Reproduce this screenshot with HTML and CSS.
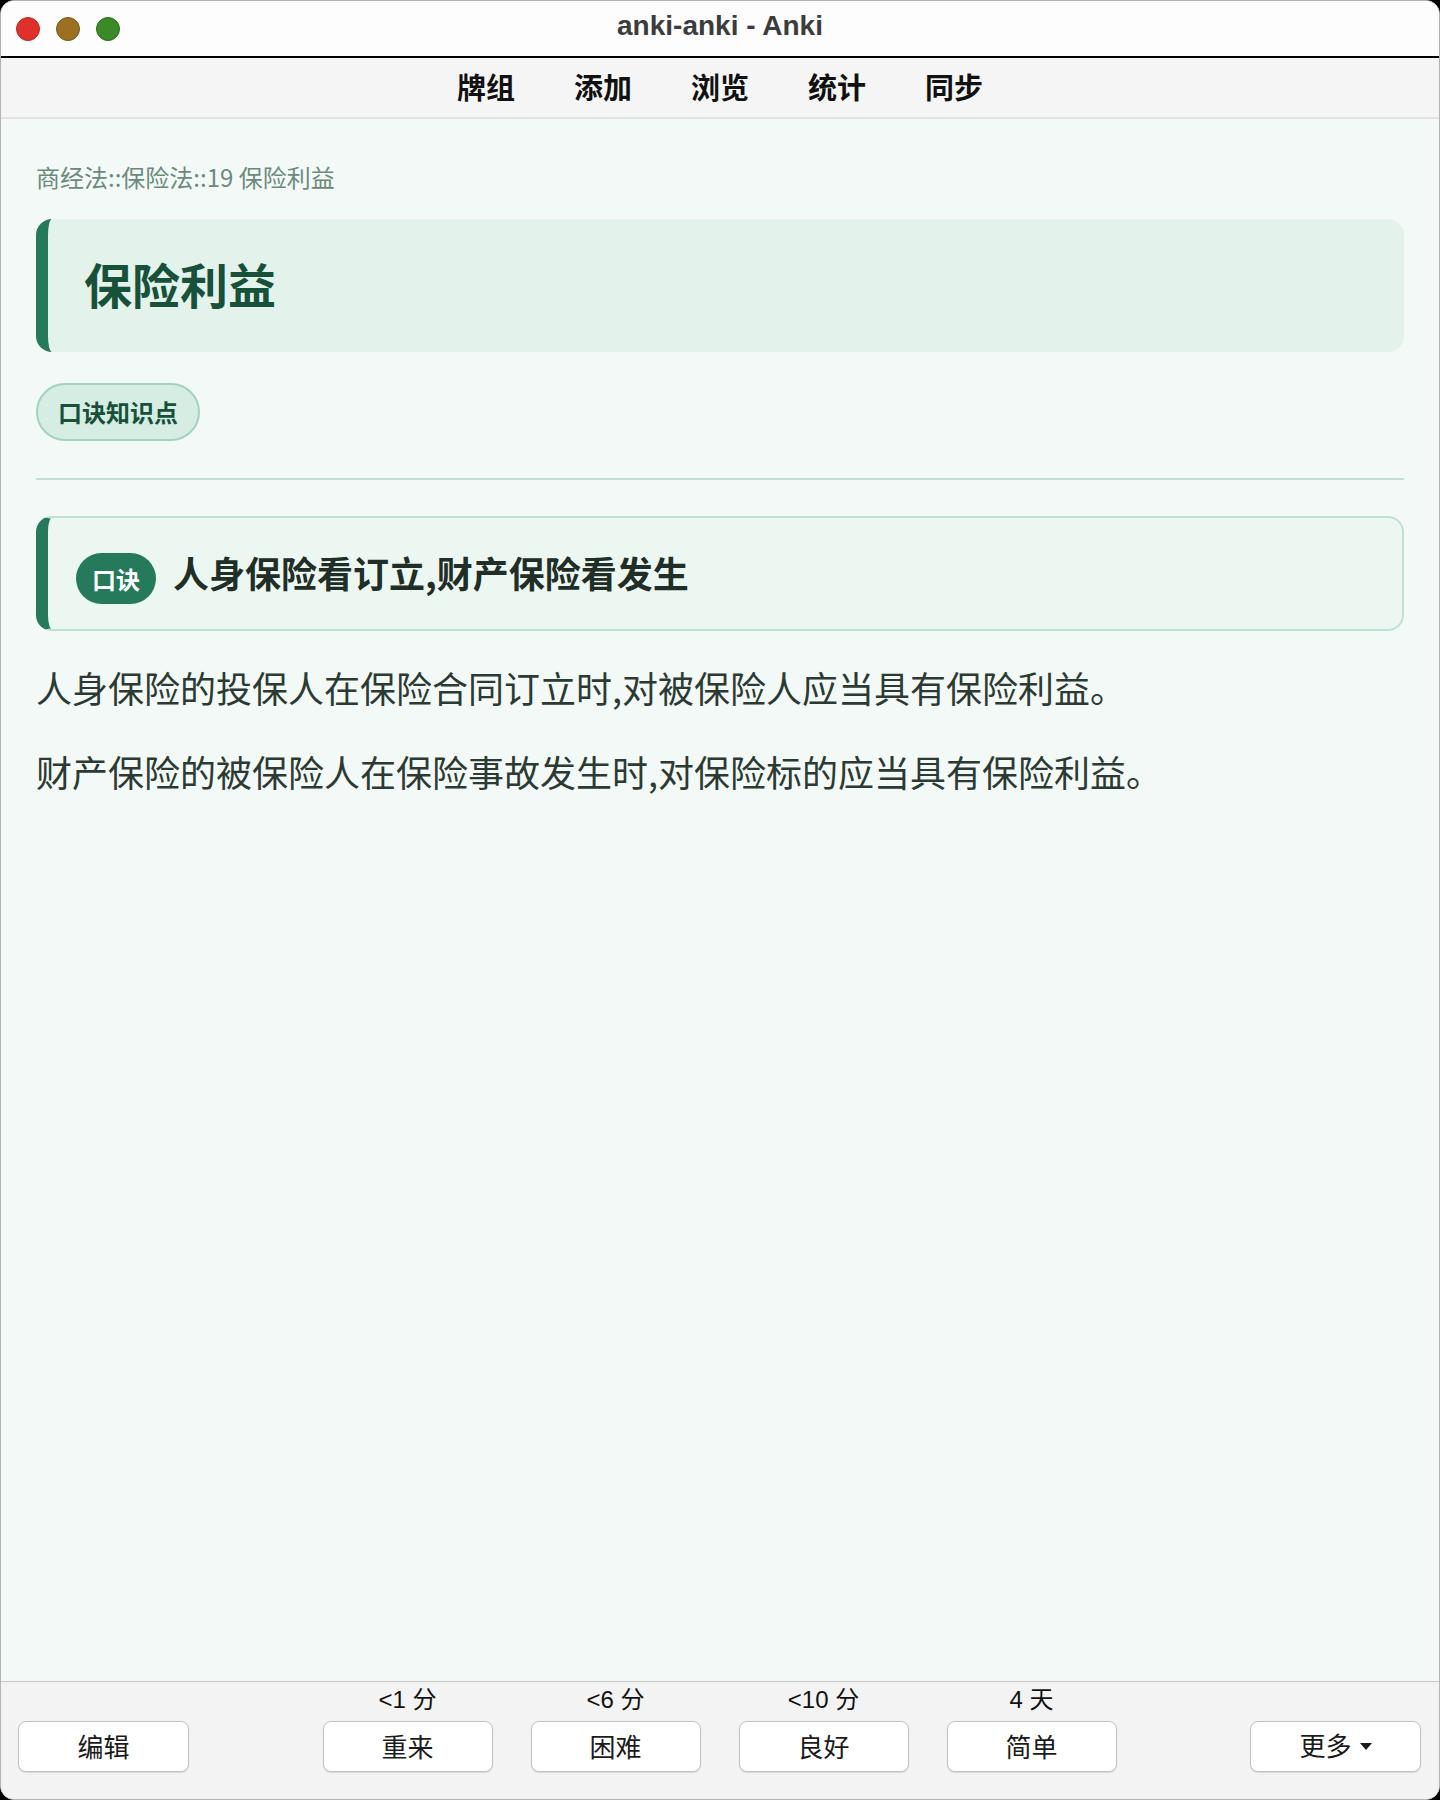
FILE: index.html
```html
<!DOCTYPE html>
<html lang="zh-CN">
	<head>
		<meta charset="UTF-8" />
		<meta name="viewport" content="width=device-width, initial-scale=1.0" />
		<title>anki-anki - Anki</title>
		<link rel="stylesheet" href="styles.css">
	</head>
	<body>
		<div class="window">
			<!-- Title bar with traffic lights -->
			<div class="titlebar">
				<div class="lights">
					<span class="light red"></span>
					<span class="light yellow"></span>
					<span class="light green"></span>
				</div>
				<div class="window-title">anki-anki - Anki</div>
				<div></div>
			</div>

			<!-- Main toolbar -->
			<nav class="toolbar">
				<a class="tool-link">牌组</a>
				<a class="tool-link">添加</a>
				<a class="tool-link">浏览</a>
				<a class="tool-link">统计</a>
				<a class="tool-link">同步</a>
			</nav>

			<!-- Card content -->
			<main class="card-view">
				<div class="breadcrumb">商经法::保险法::19 保险利益</div>

				<div class="title-card">
					<h1>保险利益</h1>
				</div>

				<div class="tags">
					<span class="tag">口诀知识点</span>
				</div>

				<hr class="divider" />

				<div class="mnemonic">
					<span class="badge">口诀</span>
					<span class="mnemonic-text">人身保险看订立,财产保险看发生</span>
				</div>

				<p class="answer-text">人身保险的投保人在保险合同订立时,对被保险人应当具有保险利益。</p>
				<p class="answer-text">财产保险的被保险人在保险事故发生时,对保险标的应当具有保险利益。</p>
			</main>

			<!-- Answer buttons -->
			<div class="answer-bar">
				<div class="bar-side">
					<button type="button" class="bar-button">编辑</button>
				</div>

				<div class="ease-group">
					<div class="ease">
						<div class="ease-time">&lt;1 分</div>
						<button type="button" class="bar-button">重来</button>
					</div>
					<div class="ease">
						<div class="ease-time">&lt;6 分</div>
						<button type="button" class="bar-button">困难</button>
					</div>
					<div class="ease">
						<div class="ease-time">&lt;10 分</div>
						<button type="button" class="bar-button">良好</button>
					</div>
					<div class="ease">
						<div class="ease-time">4 天</div>
						<button type="button" class="bar-button">简单</button>
					</div>
				</div>

				<div class="bar-side">
					<button type="button" class="bar-button more-button">
						更多
						<svg class="caret" width="12" height="8" viewBox="0 0 12 8">
							<path d="M0 0 L12 0 L6 7 Z" fill="#1b1b1b" />
						</svg>
					</button>
				</div>
			</div>
		</div>
	</body>
</html>
```

FILE: styles.css
```css
/* General styling */
html,
body {
	margin: 0;
	padding: 0;
	background-color: #000;
}
body {
	font-family: "Noto Sans CJK SC", "Liberation Sans", sans-serif;
	color: #2b3a33;
}

.window {
	height: 1800px;
	box-sizing: border-box;
	border: 1px solid #b4b4b4;
	border-radius: 14px;
	overflow: hidden;
	display: flex;
	flex-direction: column;
	background-color: #f3f9f6;
}

/* Title bar */
.titlebar {
	height: 55px;
	flex-shrink: 0;
	display: grid;
	grid-template-columns: 1fr auto 1fr;
	align-items: center;
	background-color: #fdfdfd;
	border-bottom: 2px solid #000;
	padding-left: 15px;
}
.lights {
	display: flex;
	gap: 16px;
	margin-top: 1px;
}
.light {
	width: 24px;
	height: 24px;
	box-sizing: border-box;
	border-radius: 50%;
	border: 1px solid;
}
.red {
	background-color: #e0302a;
	border-color: #bb2a20;
}
.yellow {
	background-color: #9b7022;
	border-color: #7a5518;
}
.green {
	background-color: #3c8a27;
	border-color: #2c6b1c;
}
.window-title {
	font-family: "Liberation Sans", "Noto Sans CJK SC", sans-serif;
	font-weight: bold;
	font-size: 28px;
	color: #3c3c3c;
	margin-right: 15px;
	margin-bottom: 6px;
}

/* Toolbar */
.toolbar {
	height: 59px;
	flex-shrink: 0;
	display: flex;
	justify-content: center;
	align-items: center;
	gap: 59px;
	background-color: #f5f5f5;
	border-bottom: 2px solid #e2e2e2;
}
.tool-link {
	font-size: 29px;
	font-weight: bold;
	line-height: 57px;
	padding-bottom: 2px;
	color: #111;
	cursor: pointer;
}

/* Card view */
.card-view {
	flex: 1;
	padding: 40px 35px 0;
}
.breadcrumb {
	font-size: 24px;
	line-height: 36px;
	color: #6b8a7b;
	margin-bottom: 24px;
}

.title-card {
	background-color: #e3f2ea;
	border-left: 12px solid #247a5a;
	border-radius: 16px;
	padding: 34px 36px 38px;
	margin-bottom: 31px;
}
.title-card h1 {
	margin: 0;
	font-size: 48px;
	line-height: 61px;
	font-weight: bold;
	color: #17513a;
}

.tags {
	display: flex;
}
.tag {
	font-size: 24px;
	font-weight: bold;
	line-height: 36px;
	padding: 9px 20px;
	color: #17513a;
	background-color: #d5ede3;
	border: 2px solid #a3d3be;
	border-radius: 999px;
}

.divider {
	border: none;
	border-top: 2px solid #c0e0d2;
	margin: 37px 0 36px;
}

.mnemonic {
	display: flex;
	align-items: center;
	gap: 17px;
	background-color: #edf7f2;
	border: 2px solid #bfe1d2;
	border-left: 12px solid #247a5a;
	border-radius: 16px;
	padding: 26px 28px 25px;
	margin-bottom: 28px;
}
.badge {
	flex-shrink: 0;
	margin-top: 9px;
	font-size: 24px;
	font-weight: bold;
	line-height: 35px;
	padding: 8px 16px;
	color: #fff;
	background-color: #247a5a;
	border-radius: 999px;
}
.mnemonic-text {
	font-size: 36px;
	font-weight: bold;
	line-height: 55px;
	padding-bottom: 3px;
	color: #1f2e27;
}

.answer-text {
	font-size: 36px;
	line-height: 57px;
	margin: 0 0 27px;
	color: #2b3a33;
}

/* Answer bar */
.answer-bar {
	height: 118px;
	flex-shrink: 0;
	box-sizing: border-box;
	display: flex;
	justify-content: space-between;
	align-items: flex-end;
	padding: 7px 18px 0 17px;
	background-color: #f3f3f3;
	border-top: 1px solid #c8c8c8;
}
.bar-side,
.ease {
	display: flex;
	flex-direction: column;
	align-items: center;
	margin-bottom: 27px;
}
.ease-group {
	display: flex;
	gap: 38px;
}
.ease-time {
	font-family: "Liberation Sans", "Noto Sans CJK SC", sans-serif;
	font-size: 24px;
	line-height: 24px;
	color: #111;
	margin-bottom: 9px;
	padding-bottom: 2px;
}
.bar-button {
	width: 171px;
	height: 51px;
	box-sizing: border-box;
	font-family: "Noto Sans CJK SC", sans-serif;
	font-size: 26px;
	line-height: 47px;
	color: #1b1b1b;
	background-color: #fff;
	border: 1px solid #c2c2c2;
	border-radius: 8px;
	box-shadow: 0 1px 1px rgba(0, 0, 0, 0.12);
	padding: 0 0 5px;
	cursor: pointer;
}
.ease .bar-button {
	width: 170px;
}
.ease-time + .bar-button {
	margin-top: -2px;
}
.more-button {
	display: flex;
	align-items: center;
	justify-content: center;
	gap: 8px;
}
.caret {
	margin-top: 5px;
}
```
